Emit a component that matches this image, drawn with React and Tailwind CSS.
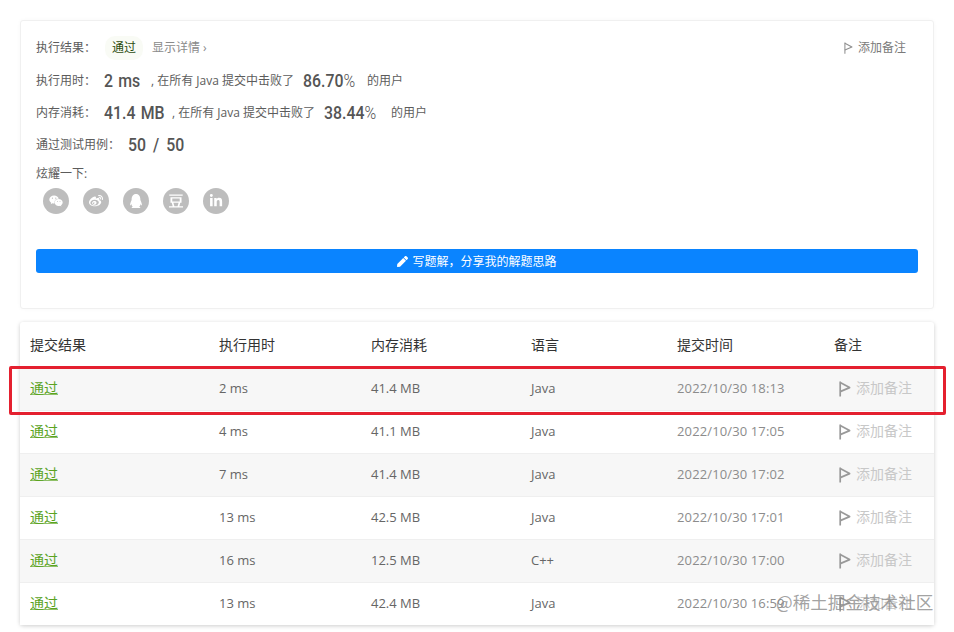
import React from "react";
import { FaWeixin, FaWeibo, FaQq, FaLinkedinIn, FaPen } from "react-icons/fa";
import { SiDouban } from "react-icons/si";

const Flag = ({ w = 12, h = 16, color = "#999", sw = 1.7 }) => (
  <svg width={w} height={h} viewBox="0 0 12 16" fill="none" stroke={color} strokeWidth={sw} className="shrink-0">
    <path d="M1.2 0.5v15" />
    <path d="M1.2 1.6 10.6 6.6 1.2 10.6" strokeLinejoin="round" />
  </svg>
);

const rows = [
  ["2 ms", "41.4 MB", "Java", "2022/10/30 18:13"],
  ["4 ms", "41.1 MB", "Java", "2022/10/30 17:05"],
  ["7 ms", "41.4 MB", "Java", "2022/10/30 17:02"],
  ["13 ms", "42.5 MB", "Java", "2022/10/30 17:01"],
  ["16 ms", "12.5 MB", "C++", "2022/10/30 17:00"],
  ["13 ms", "42.4 MB", "Java", "2022/10/30 16:59"],
];

const gridCols = "grid grid-cols-[189px_152px_160px_146px_157px_1fr] pl-[10px] items-center";
const big = "inline-block origin-left scale-x-[0.88] -translate-y-[1px] text-[18px] font-medium text-[#555] font-['Roboto',sans-serif] whitespace-pre";

const Stat = ({ label, value, pct, gapA, gapB, gapC }) => (
  <div className="flex items-center h-[32px] text-[12px] text-[#5c5c5c] whitespace-nowrap">
    <span className="w-[68px]">{label}</span>
    <span className={gapA}><span className={`${big} [word-spacing:1.5px]`}>{value}</span></span>
    <span className={gapB}>, 在所有 Java 提交中击败了</span>
    <span className={gapC}>
      <span className={big}>{pct}<span className="font-light">%</span></span>
    </span>
    <span>的用户</span>
  </div>
);

const Social = ({ children }) => (
  <span className="w-[26px] h-[26px] rounded-full bg-[#bdbdbd] text-white flex items-center justify-center text-[14px]">{children}</span>
);

export default function App() {
  return (
    <div className="relative w-[954px] h-[632px] overflow-hidden bg-white font-['Open_Sans','Noto_Sans_CJK_SC',sans-serif]">
      <div className="pt-[20px] pl-[20px]">
        <div className="w-[914px] h-[289px] rounded-[3px] border border-[#f0f0f0] shadow-[0_0_4px_rgba(0,0,0,0.03)] pl-[15px] pr-[15px] pt-[12px]">
          <div className="flex items-center h-[30px] text-[12px] text-[#5c5c5c] whitespace-nowrap">
            <span className="w-[68px]">执行结果：</span>
            <span className="w-[38px] h-[24px] ml-[1px] flex items-center justify-center rounded-[10px] bg-[#f9fbf5] text-[#2d4d0f]">通过</span>
            <span className="ml-[9px] text-[#8a8a8a]">显示详情 ›</span>
            <span className="ml-auto mr-[12px] flex items-center gap-[5px] text-[#7a7a7a]">
              <Flag w={9} h={12} color="#8f8f8f" sw={1.4} />添加备注
            </span>
          </div>
          <div className="mt-[2px]">
            <Stat label="执行用时：" value="2 ms" pct="86.70" gapA="w-[47px]" gapB="w-[152px]" gapC="w-[64px]" />
            <Stat label="内存消耗：" value="41.4 MB" pct="38.44" gapA="w-[68px]" gapB="w-[152px]" gapC="w-[67px]" />
            <div className="flex items-center h-[32px] text-[12px] text-[#5c5c5c] whitespace-nowrap">
              <span className="w-[92px]">通过测试用例：</span>
              <span className={`${big} [word-spacing:3.5px]`}>50 / 50</span>
            </div>
          </div>
          <div className="h-[26px] flex items-center text-[12px] text-[#5c5c5c]">炫耀一下:</div>
          <div className="flex gap-[14px] pl-[7px] mt-[1px]">
            <Social><FaWeixin /></Social>
            <Social><FaWeibo /></Social>
            <Social><FaQq /></Social>
            <Social><SiDouban /></Social>
            <Social><FaLinkedinIn /></Social>
          </div>
          <div className="mt-[35px] h-[24px] rounded-[3px] bg-[#0a84ff] text-white text-[12px] flex items-center justify-center gap-[4px] pt-[1px]">
            <FaPen className="text-[11px]" />写题解，分享我的解题思路
          </div>
        </div>
      </div>

      <div className="ml-[20px] mt-[13px] w-[914px] rounded-[3px] shadow-[0_1px_4px_rgba(0,0,0,0.2)] text-[14px]">
        <div className={`${gridCols} h-[45px] pb-[1px] text-[#333]`}>
          <span>提交结果</span>
          <span>执行用时</span>
          <span>内存消耗</span>
          <span>语言</span>
          <span>提交时间</span>
          <span>备注</span>
        </div>
        {rows.map((r, i) => (
          <div key={i} className={`${gridCols} h-[43px] border-t border-[#efefef] ${i % 2 === 0 ? "bg-[#f7f7f7]" : "bg-white"}`}>
            <span className="w-fit mb-[3px] text-[#5ba31f] underline underline-offset-1 decoration-[#8fc068] decoration-1">通过</span>
            <span className="text-[13px] text-[#666]">{r[0]}</span>
            <span className="text-[13px] text-[#666]">{r[1]}</span>
            <span className="text-[13px] text-[#666]">{r[2]}</span>
            <span className="text-[13px] tracking-[0.13px] text-[#8c8c8c]">{r[3]}</span>
            <span className="flex items-center gap-[5px] text-[#c8c8c8] pl-[5px]"><Flag /><span className="mb-[3px]">添加备注</span></span>
          </div>
        ))}
      </div>

      <div className="absolute left-[776px] top-[590px] text-[17.6px] leading-[24px] text-[#8a8a8a]/80 whitespace-nowrap font-['Noto_Sans_CJK_SC',sans-serif]">@稀土掘金技术社区</div>
      <div className="absolute left-[9px] top-[366px] w-[937px] h-[49px] border-[3px] border-[#e4202f] rounded-[2px]" />
    </div>
  );
}
